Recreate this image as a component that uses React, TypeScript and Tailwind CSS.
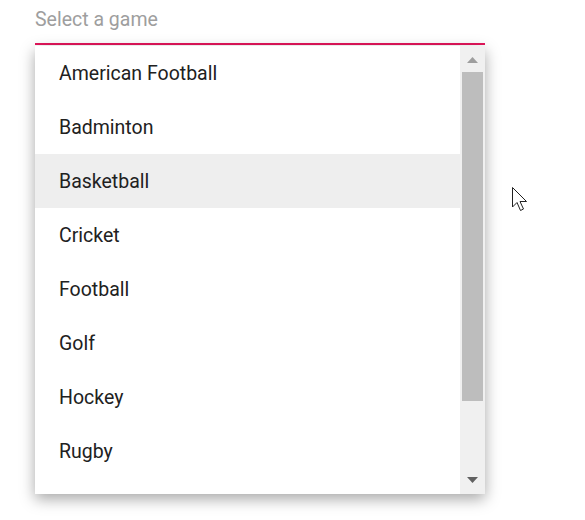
const games = ["American Football", "Badminton", "Basketball", "Cricket", "Football", "Golf", "Hockey", "Rugby"];

export default function App() {
  return (
    <div className="relative h-[520px] w-[585px] bg-white font-['Roboto',sans-serif]">
      <div className="ml-[35px] w-[450px] pt-[7px]">
        <div className="h-[38px] border-b-2 border-[#e3165b] text-[19.5px] leading-[26px] text-[#9e9e9e]">Select a game</div>
        <div className="mt-px flex h-[448px] bg-white shadow-[0_5px_14px_rgba(0,0,0,0.35)]">
          <ul className="flex-1 overflow-hidden">
            {games.map((g) => (
              <li
                key={g}
                className={`flex h-[54px] items-center pl-6 pt-[2px] text-[19.5px] text-[#212121] ${g === "Basketball" ? "bg-[#eeeeee]" : ""}`}
              >
                {g}
              </li>
            ))}
          </ul>
          <div className="flex w-[25px] flex-col items-center bg-[#f0f0f0] py-1">
            <svg width="11" height="6" viewBox="0 0 11 6" className="mt-[7px]">
              <path d="M0 6 L5.5 0 L11 6 Z" fill="#9e9e9e" />
            </svg>
            <div className="mt-[9px] h-[329px] w-[21px] bg-[#bdbdbd]" />
            <div className="flex-1" />
            <svg width="11" height="6" viewBox="0 0 11 6" className="mb-[7px]">
              <path d="M0 0 L11 0 L5.5 6 Z" fill="#616161" />
            </svg>
          </div>
        </div>
      </div>
      <svg className="absolute left-[511px] top-[186px]" width="19" height="28" viewBox="0 0 19 28">
        <path d="M1.5 1.5 L1.5 21 L6 16.5 L9.5 24.5 L12.5 23 L9 15.5 L15.5 15.5 Z" fill="white" stroke="#222" strokeWidth="1" strokeLinejoin="miter" />
      </svg>
    </div>
  );
}
